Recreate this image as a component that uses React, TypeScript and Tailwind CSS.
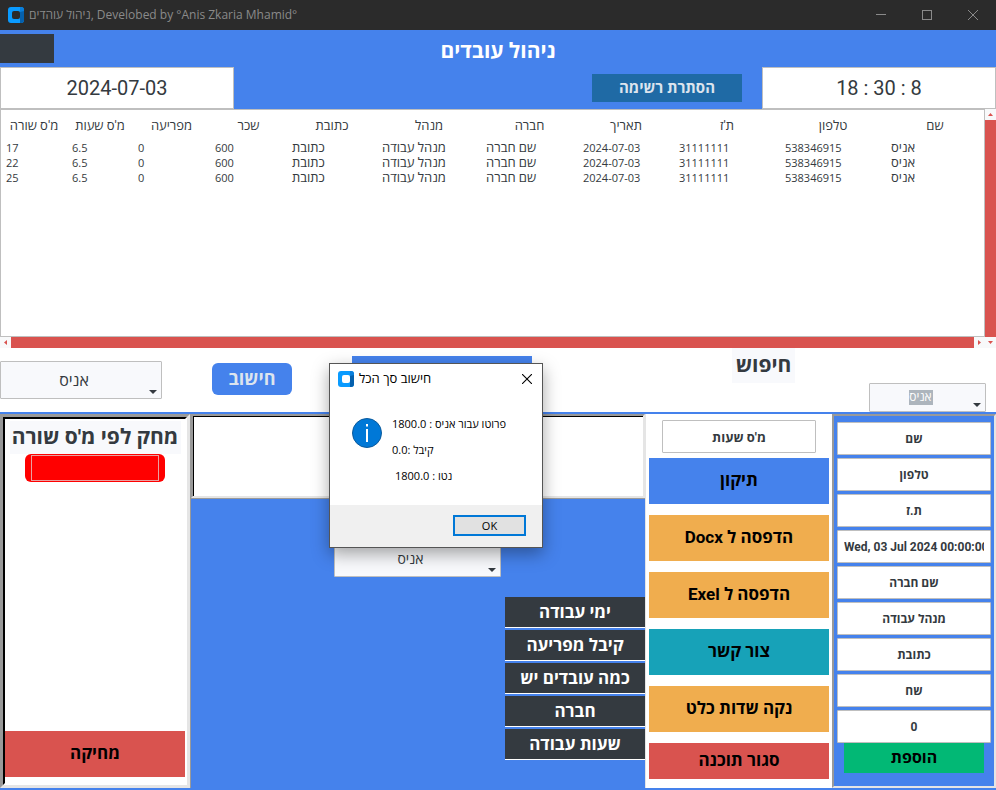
import React from "react";

const columns = [
  { title: "מ'ס שורה", width: "w-[66px]" },
  { title: "מ'ס שעות", width: "w-[66px]" },
  { title: "מפריעה", width: "w-[77px]" },
  { title: "שכר", width: "w-[77px]" },
  { title: "כתובת", width: "w-[90px]" },
  { title: "מנהל", width: "w-[104px]" },
  { title: "חברה", width: "w-[97px]" },
  { title: "תאריך", width: "w-[96px]" },
  { title: "ת'ז", width: "w-[106px]" },
  { title: "טלפון", width: "w-[106px]" },
  { title: "שם", width: "w-[98px]" },
];

const rows = ["17", "22", "25"].map((id) => [
  id,
  "6.5",
  "0",
  "600",
  "כתובת",
  "מנהל עבודה",
  "שם חברה",
  "2024-07-03",
  "31111111",
  "538346915",
  "אניס",
]);

const isNumeric = (text: string) => /^[\d.-]+$/.test(text);

const fields = [
  { label: "שם", value: "שם" },
  { label: "טלפון", value: "טלפון" },
  { label: "ת.ז", value: "ת.ז" },
  { label: "תאריך", value: "Wed, 03 Jul 2024 00:00:00 GMT" },
  { label: "שם חברה", value: "שם חברה" },
  { label: "מנהל עבודה", value: "מנהל עבודה" },
  { label: "כתובת", value: "כתובת" },
  { label: "שח", value: "שח" },
  { label: "מפריעה", value: "0" },
];

const actions = [
  { text: "תיקון", style: "h-[46px] bg-[#4582ec]" },
  { text: "הדפסה ל Docx", style: "h-[46px] bg-[#f0ad4e]" },
  { text: "הדפסה ל Exel", style: "h-[46px] bg-[#f0ad4e]" },
  { text: "צור קשר", style: "h-[46px] bg-[#17a2b8]" },
  { text: "נקה שדות כלט", style: "h-[46px] bg-[#f0ad4e]" },
  { text: "סגור תוכנה", style: "h-9 bg-[#d9534f]" },
];

const reports = ["ימי עבודה", "קיבל מפריעה", "כמה עובדים יש", "חברה", "שעות עבודה"];

function AppLogo({ hole }: { hole: string }) {
  return (
    <svg className="size-4 shrink-0" viewBox="0 0 16 16" aria-hidden="true">
      <rect width="16" height="16" rx="3" fill="#0a9bff" />
      <path d="M12 4.5 16 2v11a3 3 0 0 1-3 3h-1z" fill="#0560ad" />
      <path d="M12 0h1a3 3 0 0 1 3 3v1l-4 1z" fill="#0a7fdc" />
      <rect x="4" y="4" width="8" height="8" rx="2" fill={hole} />
    </svg>
  );
}

function Caret({ className }: { className: string }) {
  return (
    <svg className={className} viewBox="0 0 8 4" width="8" height="4" aria-hidden="true">
      <path d="M0 0h8L4 4z" fill="#343a40" />
    </svg>
  );
}

function ScrollArrow({ path }: { path: string }) {
  return (
    <button type="button" aria-label="גלילה" className="flex size-[11px] shrink-0 items-center justify-center bg-[#f8f9fa]">
      <svg width="7" height="7" viewBox="0 0 7 7" aria-hidden="true">
        <path d={path} fill="#d9534f" />
      </svg>
    </button>
  );
}

function NameSelect({ label, size }: { label: string; size: string }) {
  return (
    <div className={`relative ${size}`}>
      <select
        aria-label={label}
        className="size-full appearance-none rounded-[1px] border border-[#bfbfbf] bg-[#f8f9fc] pt-0.5 pr-3.5 text-center text-[#343a40]"
      >
        <option>אניס</option>
      </select>
      <Caret className="absolute right-[5px] bottom-[5px]" />
    </div>
  );
}

function MessageBox() {
  return (
    <div
      role="dialog"
      aria-label="חישוב סך הכל"
      className="absolute top-[363px] left-[329px] flex h-[185px] w-[214px] flex-col border border-[#555] bg-white font-['Open_Sans','Noto_Sans',sans-serif] text-[11px] text-black shadow-[0_6px_16px_rgba(0,0,0,0.35)]"
    >
      <div className="flex h-[29px] items-center gap-[5px] pr-2.5 pl-2">
        <AppLogo hole="#ffffff" />
        <span dir="rtl" className="text-[13px]">חישוב סך הכל</span>
        <button type="button" aria-label="סגירה" className="ml-auto">
          <svg width="10" height="10" viewBox="0 0 10 10" aria-hidden="true">
            <path d="M0 0l10 10M10 0L0 10" stroke="#000" strokeWidth="1.1" />
          </svg>
        </button>
      </div>
      <div className="flex flex-1 gap-2.5 pt-[25px] pl-[22px]">
        <svg width="30" height="30" viewBox="0 0 30 30" aria-hidden="true">
          <circle cx="15" cy="15" r="14.5" fill="#0078d7" stroke="#0b5a9c" />
          <path d="M15 11v13M15 6v2.500" stroke="#fff" strokeWidth="2" />
        </svg>
        <div className="-mt-[7px] flex flex-col items-start leading-[26px]">
          <p dir="rtl">פרוטו עבור אניס : 1800.0</p>
          <p dir="rtl">קיבל :0.0</p>
          <p dir="rtl" className="pl-[3px]">נטו : 1800.0</p>
        </div>
      </div>
      <div className="flex h-[42px] items-start justify-end bg-[#f0f0f0] pt-2.5 pr-4">
        <button type="button" className="h-[21px] w-[73px] border-2 border-[#0078d7] bg-[#e1e1e1] leading-4">
          OK
        </button>
      </div>
    </div>
  );
}

export default function App() {
  return (
    <div className="relative flex min-h-screen flex-col bg-white font-['Roboto','Open_Sans','Noto_Sans',sans-serif] text-[#343a40]">
      <div className="flex h-[30px] items-center bg-[#2b2b2b] pl-2 font-['Open_Sans','Noto_Sans',sans-serif] text-xs text-[#8a8a8a]">
        <AppLogo hole="#2b2b2b" />
        <span className="ml-[5px]">ניהול עוהדים, Develobed by °Anis Zkaria Mhamid°</span>
        <div className="ml-auto flex">
          <button type="button" aria-label="מזעור" className="flex w-[46px] items-center justify-center">
            <svg width="10" height="10" viewBox="0 0 10 10" aria-hidden="true">
              <path d="M0 4.500h10" stroke="#8a8a8a" />
            </svg>
          </button>
          <button type="button" aria-label="הגדלה" className="flex w-[46px] items-center justify-center">
            <svg width="10" height="10" viewBox="0 0 10 10" aria-hidden="true">
              <rect x="0.5" y="0.5" width="9" height="9" fill="none" stroke="#8a8a8a" />
            </svg>
          </button>
          <button type="button" aria-label="סגירה" className="flex w-[46px] items-center justify-center">
            <svg width="10" height="10" viewBox="0 0 10 10" aria-hidden="true">
              <path d="M0 0l10 10M10 0L0 10" stroke="#8a8a8a" />
            </svg>
          </button>
        </div>
      </div>

      <header className="bg-[#4582ec]">
        <div className="grid h-[37px] grid-cols-[1fr_auto_1fr] items-center">
          <button type="button" aria-label="תפריט" className="h-[29px] w-[54px] bg-[#343a40]" />
          <h1 dir="rtl" className="pt-1 text-[21px] leading-7 font-bold text-white">ניהול עובדים</h1>
        </div>
        <div className="flex h-[42px] items-center">
          <div className="flex h-full w-[234px] items-center justify-center border border-[#bfbfbf] bg-white text-xl">
            2024-07-03
          </div>
          <button type="button" dir="rtl" className="mr-5 ml-auto h-7 w-[150px] bg-[#1f6aa5] text-[15px] font-bold text-[#dce4ee]">
            הסתרת רשימה
          </button>
          <div className="flex h-full w-[234px] items-center justify-center border border-[#bfbfbf] bg-white text-xl">
            18 : 30 : 8
          </div>
        </div>
      </header>

      <section className="flex h-[239px]">
        <div className="flex min-w-0 flex-1 flex-col">
          <div className="flex-1 border border-[#bfbfbf] text-[13px]">
            <table className="w-full table-fixed">
              <thead>
                <tr className="h-[30px]">
                  {columns.map((c) => (
                    <th key={c.title} dir="rtl" className={`p-0 pt-0.5 text-center font-normal whitespace-nowrap ${c.width}`}>
                      {c.title}
                    </th>
                  ))}
                </tr>
              </thead>
              <tbody>
                {rows.map((row) => (
                  <tr key={row[0]}>
                    {row.map((cell, i) => (
                      <td
                        key={i}
                        className={
                          isNumeric(cell)
                            ? "p-0 pl-[5px] align-middle font-['Open_Sans','Noto_Sans',sans-serif] text-[11px] leading-[15px] whitespace-nowrap"
                            : "p-0 pl-[5px] align-middle leading-[15px] whitespace-nowrap"
                        }
                      >
                        {cell}
                      </td>
                    ))}
                  </tr>
                ))}
              </tbody>
            </table>
          </div>
          <div className="flex h-[11px]">
            <ScrollArrow path="M5 1v5L2 3.500z" />
            <div className="flex-1 bg-[#d9534f]" />
            <ScrollArrow path="M2 1v5l3-2.500z" />
          </div>
        </div>
        <div className="flex w-[11px] flex-col">
          <ScrollArrow path="M1 5h5L3.500 2z" />
          <div className="flex-1 bg-[#d9534f]" />
          <ScrollArrow path="M1 2h5L3.500 5z" />
        </div>
      </section>

      <section className="flex h-16 items-start">
        <div className="pt-[13px] text-base">
          <NameSelect label="עובד לחישוב" size="h-[38px] w-[162px]" />
        </div>
        <button type="button" dir="rtl" className="mt-[15px] ml-[50px] h-8 w-20 rounded-md bg-[#4582ec] text-lg font-bold text-[#dce4ee]">
          חישוב
        </button>
        <div className="mt-2 ml-[60px] h-8 w-[180px] bg-[#4582ec]" />
        <h2 dir="rtl" className="ml-auto h-[35px] w-[63px] bg-[#f8f9fc] text-center text-[21px] leading-[35px] font-bold">
          חיפוש
        </h2>
        <div className="relative mt-[35px] mr-2.5 ml-[74px] flex h-[29px] w-[117px] items-center justify-center rounded-[1px] border border-[#bfbfbf] bg-[#f8f9fc] pr-3.5">
          <select aria-label="חיפוש עובד" className="h-[15px] w-6 appearance-none bg-[#adb5bd] text-center text-xs leading-[15px] text-white">
            <option>אניס</option>
          </select>
          <Caret className="absolute right-1 bottom-1" />
        </div>
      </section>

      <main className="flex flex-1 border-y-2 border-[#4582ec]">
        <section className="flex w-[190px] shrink-0 border-[3px] border-t-[#999] border-r-[#e5e5e5] border-b-[#e5e5e5] border-l-[#999]">
          <div className="flex flex-1 flex-col items-center border-2 border-t-black border-r-white border-b-white border-l-black">
            <h2 dir="rtl" className="mt-0.5 h-[33px] w-[171px] bg-[#f8f9fc] text-center text-[21px] leading-[33px] font-bold whitespace-nowrap">
              מחק לפי מ'ס שורה
            </h2>
            <div className="h-7 w-[140px] rounded-md bg-[#ff0000] px-1.5 py-px">
              <input aria-label="מ'ס שורה למחיקה" className="h-[26px] w-full border border-[#e8a0a0] bg-[#ff0000] px-1" />
            </div>
            <button type="button" dir="rtl" className="mt-auto mb-[6px] h-[46px] w-full bg-[#d9534f] text-[17px] font-bold text-black">
              מחיקה
            </button>
          </div>
        </section>

        <section className="flex min-w-0 flex-1 flex-col border-l border-[#999] bg-[#4582ec]">
          <div className="h-[84px] border-2 border-t-[#999] border-r-[#e5e5e5] border-b-[#e5e5e5] border-l-[#999] bg-white">
            <div className="size-full border-t border-l border-black" />
          </div>
          <div className="flex flex-1 flex-col border-t border-[#999] pt-10">
            <div className="ml-[143px] text-sm">
              <NameSelect label="עובד" size="h-[38px] w-[167px]" />
            </div>
            <div className="mt-5 flex flex-col gap-0.5 self-end">
              {reports.map((text) => (
                <button key={text} type="button" dir="rtl" className="h-[31px] w-[140px] border-b border-white bg-[#343a40] text-[17px] leading-[30px] font-bold whitespace-nowrap text-white">
                  {text}
                </button>
              ))}
            </div>
          </div>
        </section>

        <section className="flex w-[187px] shrink-0 flex-col items-center border-l border-[#e5e5e5] pt-1.5">
          <input
            aria-label="מ'ס שעות"
            defaultValue="מ'ס שעות"
            dir="rtl"
            className="h-[33px] w-[154px] rounded-[1px] border border-[#bfbfbf] bg-white text-center text-[13px] font-bold"
          />
          <div className="mt-[5px] flex w-[180px] flex-col gap-[11px]">
            {actions.map((a) => (
              <button key={a.text} type="button" dir="rtl" className={`text-[17px] font-bold text-black ${a.style}`}>
                {a.text}
              </button>
            ))}
          </div>
        </section>

        <section className="flex w-[164px] shrink-0 flex-col items-center border-2 border-t-[#999] border-r-[#e5e5e5] border-b-[#e5e5e5] border-l-[#999] bg-[#4582ec] pt-1.5">
          <div className="flex flex-col gap-[3px]">
            {fields.map((f) => (
              <input
                key={f.label}
                aria-label={f.label}
                defaultValue={f.value}
                className="h-[33px] w-[154px] rounded-[1px] border border-[#bfbfbf] bg-white px-1.5 text-center text-xs font-bold"
              />
            ))}
          </div>
          <button type="button" dir="rtl" className="h-[30px] w-[140px] bg-[#02b875] text-base font-bold text-black">
            הוספת
          </button>
        </section>
      </main>

      <MessageBox />
    </div>
  );
}
